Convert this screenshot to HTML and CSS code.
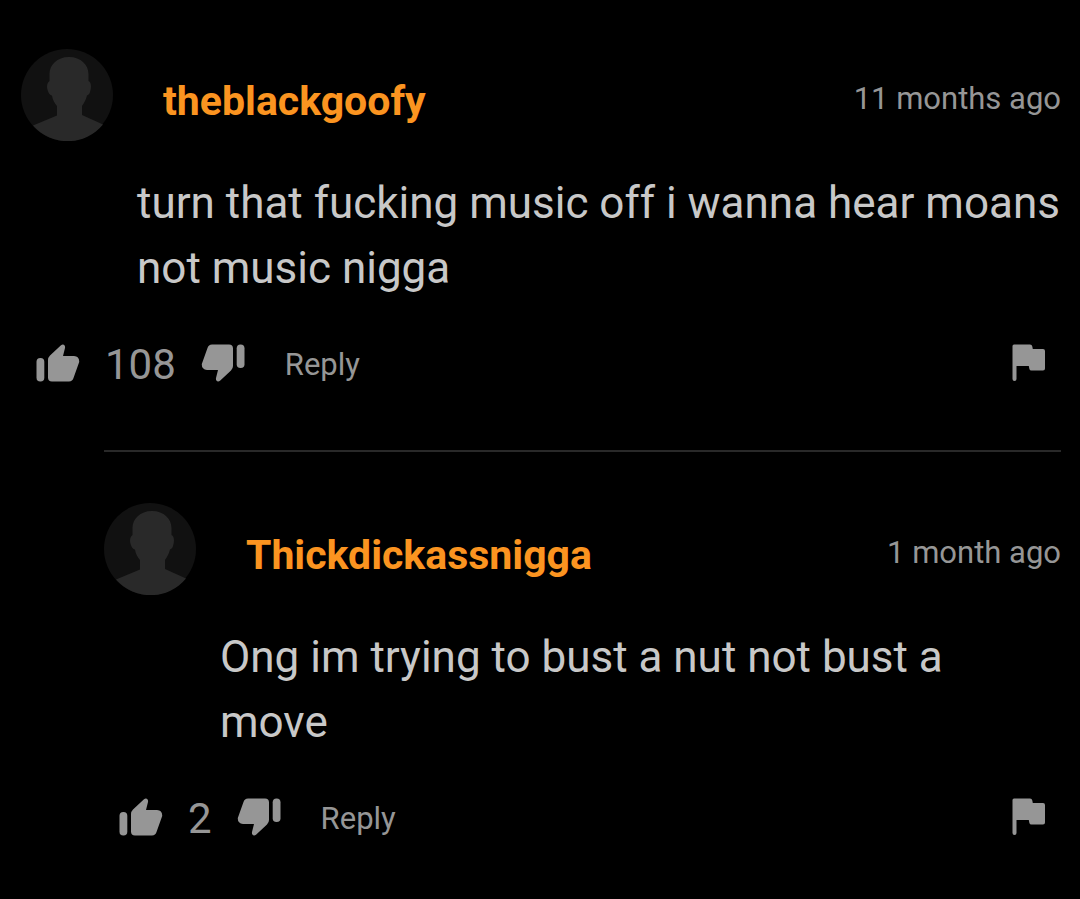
FILE: index.html
```html
<!DOCTYPE html>
<html lang="en">
  <head>
    <meta charset="UTF-8" />
    <meta name="viewport" content="width=device-width, initial-scale=1.0" />
    <title>Comments</title>
    <link rel="stylesheet" href="styles.css">
  </head>
  <body>
    <!-- Shared icons -->
    <svg class="sprite" aria-hidden="true">
      <symbol id="avatar" viewBox="0 0 92 92">
        <circle cx="46" cy="46" r="46" fill="#111111" />
        <path
          fill="#292929"
          d="M48 8C60 8 67.500 16 67.500 25V32C70 33 70.500 37 69.500 41C69 44 68 46 66 46.500C65 51 63 54 61 57V66L82 75.500A46 46 0 0 1 12 76.500L36 66.500V57C33.500 54 31.500 51 31 46.500C28 46 26.500 42 26 38C26 35 27 33 28.500 32V25C28.500 16 36 8 48 8Z"
        />
      </symbol>
      <symbol id="thumb" viewBox="0 0 44 38">
        <rect x="0.500" y="14" width="7.800" height="23.500" rx="3.800" />
        <path
          d="M12 16Q12 13.500 14 11.500L25 1.200Q27.300 -0.500 28.800 1.800Q29.200 2.800 29 4L27 12H38Q43.500 12.500 43.200 18L37.500 34Q36.500 37.300 33 37.500H16Q12 37.500 12 33.500Z"
        />
      </symbol>
      <symbol id="flag" viewBox="0 0 34 38">
        <path
          d="M2 0.500H18Q20 0.500 20.300 2.500L20.800 5H31Q33 5 33 7V24.500Q33 26.500 31 26.500H19.500Q17.700 26.500 17.400 25L16.800 22H4.500V35Q4.500 37 2.500 37Q0.500 37 0.500 35V2Q0.500 0.500 2 0.500Z"
        />
      </symbol>
    </svg>

    <main class="comments">
      <article class="comment">
        <header class="comment-header">
          <svg class="avatar"><use href="#avatar" /></svg>
          <a class="username" href="#">theblackgoofy</a>
          <span class="date">11 months ago</span>
        </header>
        <p class="message">turn that fucking music off i wanna hear moans not music nigga</p>
        <footer class="actions">
          <button class="icon-btn" aria-label="Like"><svg class="thumb"><use href="#thumb" /></svg></button>
          <span class="votes">108</span>
          <button class="icon-btn" aria-label="Dislike"><svg class="thumb thumb-down"><use href="#thumb" /></svg></button>
          <button class="reply-btn">Reply</button>
          <button class="icon-btn flag-btn" aria-label="Report"><svg class="flag"><use href="#flag" /></svg></button>
        </footer>
      </article>

      <article class="comment nested">
        <header class="comment-header">
          <svg class="avatar"><use href="#avatar" /></svg>
          <a class="username" href="#">Thickdickassnigga</a>
          <span class="date">1 month ago</span>
        </header>
        <p class="message">Ong im trying to bust a nut not bust a move</p>
        <footer class="actions">
          <button class="icon-btn" aria-label="Like"><svg class="thumb"><use href="#thumb" /></svg></button>
          <span class="votes">2</span>
          <button class="icon-btn" aria-label="Dislike"><svg class="thumb thumb-down"><use href="#thumb" /></svg></button>
          <button class="reply-btn">Reply</button>
          <button class="icon-btn flag-btn" aria-label="Report"><svg class="flag"><use href="#flag" /></svg></button>
        </footer>
      </article>
    </main>
  </body>
</html>
```

FILE: styles.css
```css
:root {
  --accent-color: #fb9420;
  --primary-text: #c8c8c8;
  --secondary-text: #969696;
  --border-color: #292929;
}

/* Reset & Global Styles */
* {
  box-sizing: border-box;
  margin: 0;
  padding: 0;
}
body {
  background: #000;
  font-family: Roboto, "Liberation Sans", sans-serif;
  color: var(--primary-text);
}
button {
  background: none;
  border: none;
  color: var(--secondary-text);
  font-family: inherit;
  cursor: pointer;
}
svg {
  display: block;
  fill: currentColor;
}
.sprite {
  display: none;
}

/* Comments */
.comments {
  padding: 49px 19px 0 21px;
}
.nested {
  margin: 68px 0 0 83px;
  padding-top: 51px;
  border-top: 2px solid var(--border-color);
}

/* Header */
.comment-header {
  display: flex;
  align-items: center;
}
.avatar {
  width: 92px;
  height: 92px;
  flex: none;
}
.username {
  margin-left: 50px;
  padding-top: 12px;
  color: var(--accent-color);
  font-size: 41px;
  font-weight: bold;
  line-height: 48px;
  text-decoration: none;
}
.date {
  margin-left: auto;
  padding-top: 8px;
  color: var(--secondary-text);
  font-size: 31px;
  line-height: 40px;
}

/* Text */
.message {
  margin: 30px 0 0 116px;
  font-size: 44px;
  line-height: 65px;
}
.nested .message {
  padding-right: 16px;
}

/* Actions */
.actions {
  display: flex;
  align-items: center;
  height: 38px;
  margin-top: 43px;
  padding: 0 15px;
}
.thumb {
  width: 44px;
  height: 38px;
}
.thumb-down {
  transform: rotate(180deg);
}
.votes {
  margin: 0 25px;
  padding-top: 4px;
  color: var(--secondary-text);
  font-size: 42px;
  line-height: 48px;
}
.reply-btn {
  margin-left: 40px;
  padding-top: 4px;
  font-size: 31px;
  line-height: 40px;
}
.flag-btn {
  margin-left: auto;
}
.flag {
  width: 34px;
  height: 38px;
}
```
